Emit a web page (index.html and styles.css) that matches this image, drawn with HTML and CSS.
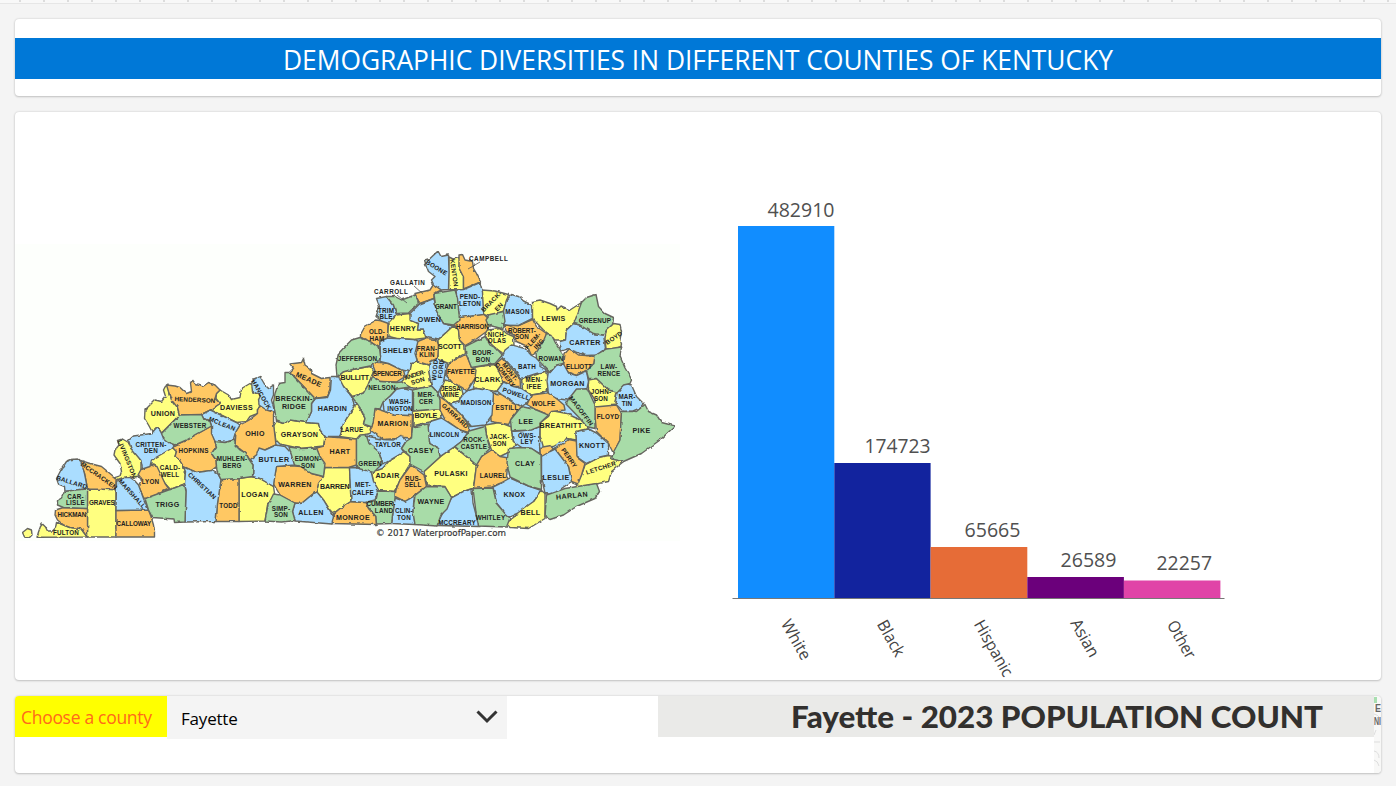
FILE: index.html
```html
<!DOCTYPE html>
<html lang="en">
<head>
<meta charset="utf-8">
<title>Demographic Diversities in Kentucky</title>
<link rel="stylesheet" href="styles.css">
</head>
<body>
<div class="ruler"></div>
<main class="page">
<header class="card card-title"><h1 class="banner"><svg class="banner-text" viewBox="0 0 1366 41"><text x="268" y="32" textLength="830" lengthAdjust="spacingAndGlyphs">DEMOGRAPHIC DIVERSITIES IN DIFFERENT COUNTIES OF KENTUCKY</text></svg></h1></header>
<section class="card card-main">
<svg class="map" viewBox="15 244 665 297">
<defs>
<filter id="rough" x="0" y="0" width="1" height="1"><feTurbulence type="fractalNoise" baseFrequency=".16" numOctaves="2" seed="4"/><feDisplacementMap in="SourceGraphic" scale="2.8" xChannelSelector="R" yChannelSelector="G"/></filter>
</defs>
<path class="blue" d="M400,335 550,365 595,400 590,460 480,480 300,480 250,440 335,400z"/>
<g class="counties" filter="url(#rough)">
<path class="yellow" d="M27.5,528.5 31.5,530 32,535 29,538 24.5,537 22.5,532.5z
M37,537.3 38.5,532 40.5,526.5 42.5,524 45.5,527 47.5,531 52.5,531 55.5,528 56.5,522.5 63.5,525 70,527.5 81,528.5 87,537z
M87.5,489 116,489.5 116,537 87.5,537z
M122.5,439 128.5,442.5 131,448.5 138.5,456 141,461.5 141,470 138.5,476 135,478.5 130,476.5 123.5,477.5 115,480.5 112.5,478.5 120,476 121.5,471.5 120,463.5 114,455 115,450 119,445 117.5,440.5z
M165,387 168,384 169,395 173.5,400 177.5,407.5 179.5,415 161.5,433 157.5,426.5 152,431.5 148.5,425 144.5,418.5 145,410 155,400 161.5,401.5 165.5,396.5 163.5,390z
M220,390 228.5,395 231.5,399.5 240,397.5 241.5,388.5 250,383.5 253.5,386 252.5,391.5 260.5,395 259,400 262.5,405 257.5,409.5 257.5,413.5 250,416.5 246.5,421.5 236.5,422.5 210.5,410 220,403.5 216,398.5 216.5,393.5z
M171.5,446.5 176.5,451.5 175,456.5 179.5,460 183.5,466.5 185.5,471.5 184.5,484 170.5,489.5 165,483.5 158.5,473.5 155,465.5 150,464 151.5,459z
M239,478.5 250,476.5 260,478.5 273.5,486.5 275,496.5 267.5,505 265,521 239,521.5z
M276.5,421 283.5,423.5 290,420 306.5,422.5 318.5,423.5 320,430 325,436.5 323.5,446 300,448.5 280,444 276,440 273.5,426.5z
M357,404 361.5,411.5 365,418.5 363.5,423.5 372.5,427.5 370,433.5 363.5,435 356.5,439 339.5,436.5 343.5,423.5 346.5,418.5 353,406.5z
M325,467.5 349.5,467.5 351,501.5 340,508.5 333.5,513.5 330,510 323.5,500 316.5,492 318.5,483.5 323,476.5z
M403.5,451.5 410,456.5 410,464 400,480 395,491.5 378.5,490.5 373.5,481.5 371.5,472.5 382.5,468.5 390,460z
M338,377 343.5,371.5 350,370 370,366.5 373.5,371 371.5,377 368,385 363.5,393 352.5,396.5 343.5,386.5 339.5,381.5z
M449,257 453,259 460,257.5 459,268 463.5,276.5 463.5,290 448.5,289.5z
M481.5,290 495,291 508.5,294.5 506.5,301.5 503.5,311 490,316.5 483.5,314.5z
M388.5,323.5 396.5,315 410,313.5 411.5,320 418.5,324 417.5,330 423.5,330 426,338 413.5,339.5 396.5,338.5 387.5,336z
M454,325 458.5,330 459.5,340 463.5,345 464.5,353.5 448.5,363.5 438,359 438,340 446.5,332z
M532.5,301.5 540,300 550,303.5 556.5,306.5 557,310 561,306 570,310 581.5,302.5 580,311.5 573.5,323.5 566.5,330 565.5,340 555,340 550,335 543.5,330 532.5,318.5z
M613.5,323.5 620,324.5 621.5,331.5 620,340 622.5,346.5 613.5,350 606,348.5 605,338.5 606.5,330z
M486.5,330 501.5,328.5 506.5,333.5 513.5,336.5 514,345 503.5,353.5 496,348.5 488.5,341.5 485,335z
M411.5,363.5 417.5,362 428.5,365 430,378 431,386 418.5,388.5 405,387 401.5,382 408,374z
M445,380 452,382 461.5,388 463,394 459,402 450,404 443,398 440,392z
M413.5,411 440,408.5 441,418 428.5,422 413,426z
M475,367 495,364.5 501.5,375 503,385 496.5,391.5 486.5,390 473.5,388 475,378.5z
M521.5,377.5 528.5,377.5 538,374 546.5,370 548.5,381.5 547.5,390 540,393.5 531.5,395 522.5,388.5z
M588.5,380 596.5,378.5 608.5,390 617,392 615,402 616.5,406.5 595,408.5 595,400 588.5,390z
M540,423 548.5,416.5 551.5,410.5 566.5,413.5 583.5,421.5 588.5,428.5 576,431.5 576.5,440 566.5,438.5 553.5,446.5 543.5,447.5 540,435z
M485,425 500,422.5 511.5,427 511.5,431 513.5,441.5 516.5,443.5 510,451.5 500,456.5 491.5,450 487,437z
M454,446.5 476.5,465 473.5,488 463.5,491.5 451.5,497.5 445,486.5 426.5,485 424,471.5 440,457z
M585,465 600,457 608.5,455.5 621.5,458.5 623.5,461.5 611.5,471.5 608.5,481.5 596.5,484 575,487.5 581.5,475z
M541.5,490.5 545,493.5 545,518.5 528.5,528.5 510,527.5 506,523.5 516.5,515 520,508.5 533.5,501.5z"/>
<path class="orange" d="M63.5,507.5 87.5,508.5 87.5,537 83,531.5 81,528.5 70,527.5 63.5,525 57.5,520 55,515 55.5,510z
M79,460 90,463.5 101.5,466.5 110,473.5 116,478.5 116,489.5 87.5,489 84.5,473.5z
M116,510.5 148.5,510 151,516.5 153.5,525 154.5,531.5 154.5,537 116,537z
M150,465 157,466.5 165,483.5 169,489 148.5,498.5 143.5,498 138.5,485.5 141.5,480 138,475 141,469.5z
M166.5,385 175,386 180,387.5 186.5,393.5 191.5,391.5 190.5,383 192.5,380 195,383.5 203.5,386 208.5,382.5 215,385 220,390 216.5,393.5 215,398.5 220,403.5 210.5,410 201.5,414.5 179.5,415 177.5,407.5 171.5,400 168.5,391.5z
M211.5,426 215,441.5 216.5,446.5 211.5,453.5 216,460 216.5,466.5 211.5,470.5 196.5,472.5 183.5,466.5 179.5,460 175,456.5 176.5,451.5 171.5,446.5 175,445 186.5,440z
M221,479.5 239,478.5 239,521.5 216,521.5 217.5,503.5z
M262.5,406 273.5,412.5 273.5,423.5 276,445 265,450 256.5,455 250,460 246,453.5 240,449 235,446.5 236,431.5 240,425 248.5,420.5 257.5,413.5 257.5,409.5z
M290,372 293.5,368.5 290,364 301.5,362.5 303.5,358.5 305,365 310,368.5 311.5,373.5 321.5,378.5 330,377.5 330,390 327.5,396.5 315,398.5z
M325,436.5 356.5,439 356.5,465 348.5,467.5 325,467.5 320,458.5 316.5,448 324,446z
M276.5,466 294.5,466 301.5,466.5 311.5,473.5 323.5,476.5 318.5,483.5 316.5,491.5 310,496.5 301.5,503.5 295,503.5 280,495 273.5,484z
M333.5,514 340,508.5 351,501.5 365,502.5 368.5,508.5 376,516.5 376.5,524.5 331.5,523.5z
M375,408.5 385,411.5 393.5,415 412.5,415.5 411.5,438 405,437.5 398.5,438.5 383.5,439.5 370,430 373.5,418.5z
M371.5,361.5 388.5,363.5 403.5,370 405,376.5 396.5,382 380,381.5 371.5,376.5 375,371z
M360.5,334.5 365,326.5 376.5,320 388,322 387.5,338.5 380,341.5 379.5,347.5 370,341.5 360.5,337.5z
M415,293.5 430,290 433.5,284.5 441.5,290 434,293.5 434,298.5 419.5,303.5z
M459,255 462.5,254.5 465,260 472.5,261.5 473.5,268.5 476.5,273.5 480.5,282 463.5,289 463.5,277 459,268z
M417.5,341.5 425,338.5 436.5,339.5 438.5,345 437.5,360 430,361.5 428.5,365 417.5,361.5 415,353.5z
M454,324.5 460,320 459.5,317 483.5,314 491.5,321.5 486.5,331.5 475,340 465,345.5 459.5,340 458.5,330z
M503.5,325 518.5,325.5 532.5,319.5 536.5,326.5 546.5,333.5 545,340 538.5,351.5 531.5,355.5 527.5,346.5 516.5,341.5 513.5,335 506.5,331.5z
M565,353.5 569.5,348.5 578.5,355 586.5,355.5 595,356.5 594,363.5 586.5,371 576.5,375.5 568.5,372.5 563.5,366.5z
M496,363.5 502.5,358 508,364 520,378.5 520.5,386.5 513.5,386.5 503.5,381.5 499,372z
M448.5,363.5 466.5,354 471.5,367.5 476,370 475,378.5 467,391 461.5,387 452,382 445,374z
M439.5,396.5 446.5,401.5 460,413.5 470,426.5 468.5,432.5 460,430 445,419.5 440,410z
M493.5,393 501.5,394.5 511.5,401.5 521.5,406.5 511.5,418.5 508.5,424.5 491.5,421.5 490,413.5 493,402z
M531.5,395 550,392.5 556.5,398.5 564,405 565,410 551.5,411.5 548.5,415 536.5,410 527,404.5z
M595,407 616.5,405 621.5,413.5 620,440 613.5,453.5 608.5,443.5 596.5,431.5 595,416z
M555,449 568.5,439.5 576.5,441 577.5,458 585,463.5 581.5,475 578,484 571.5,481.5 568.5,467z
M540,447.5 551,445.5 553,449 549,453 543,458 540,453z
M491.5,450 500,456.5 508.5,458 506.5,476.5 511,482 500,483.5 492,487 473.5,488.5 476.5,465 481.5,456.5z
M411,465 424,475 426.5,486.5 415,495 405,501.5 395,496.5 396,490 400,480z"/>
<path class="blue" d="M77.5,459 81,461.5 84.5,473.5 87.5,488.5 75,490.5 65,491.5 64.5,486.5 58.5,484 56.5,478.5 61,470 66.5,461.5 71.5,459.5z
M116.5,481.5 123.5,477.5 130,477.5 134.5,480.5 138.5,485 143.5,498.5 148.5,510 116,510.5z
M128.5,440.5 133.5,436 151.5,433.5 157.5,426.5 161,432.5 166.5,438.5 175,444 171.5,448.5 151.5,460 150,466.5 142.5,469 141,460.5 131,448.5z
M255,378.5 260,376.5 265,385 268.5,388.5 273.5,385 273.5,395 271.5,400 275,412.5 266.5,410 259,405 258.5,400 260.5,395.5 252.5,391.5 251.5,383.5z
M201.5,414.5 210.5,410 236.5,422.5 240,425 236,431.5 233.5,440 225,442.5 215,441.5 211.5,433.5 211.5,426 210,421.5 203.5,418.5z
M183.5,467 196.5,472.5 211.5,470.5 218,474 221,479.5 217.5,503.5 216,521.5 185,522 186,490 184.5,484 185.5,471.5z
M276,445 285,446.5 291.5,453.5 295,465 276.5,466.5 274,481.5 273.5,486.5 260,478.5 252.5,476.5 253,465 250,460 256.5,455 259,448 265,450z
M331.5,376.5 338.5,376.5 343.5,386.5 351.5,396.5 355,406.5 346.5,418.5 343.5,423.5 339.5,436.5 325,436.5 320,430 318.5,423.5 306.5,422.5 311.5,411.5 311.5,403.5 315.5,398.5 327.5,397.5 330.5,390z
M295,503 301.5,503.5 313.5,493.5 317,492 323.5,500 329.5,510 333.5,516.5 332,524 295,521 292.5,511.5z
M349.5,467.5 368.5,468 371.5,473 373.5,481.5 378.5,490 375,500 365,502.5 351,501.5z
M366.5,436 383.5,439.5 393.5,440 401.5,435 406,441.5 401.5,448.5 403.5,452 393.5,458 383.5,464 378.5,452 369,444z
M396.5,389 403.5,387.5 412.5,390 412.5,415.5 393.5,415 384,411 383,402 390,396z
M376.5,298.5 386.5,296.5 393.5,305 396.5,315 388.5,323.5 381.5,321 376,316.5 379.5,306.5z
M424.5,260 430,258.5 438,251 441,256.5 448.5,255 449,271.5 448.5,289.5 441.5,290 433.5,284.5 431.5,280 435,276.5 428.5,271.5 426.5,266.5z
M456,290 463.5,289.5 480,282.5 482.5,292 483.5,314.5 459.5,317.5z
M410,313.5 419.5,304 434,298.5 436,310 443.5,323.5 453,326 446.5,332 438.5,339 426.5,336.5 423.5,330 417.5,330 418.5,323.5 410,320z
M380,341.5 387.5,338 413.5,339.5 418,341 415,353.5 417.5,361.5 411.5,363.5 410,371.5 401.5,370 388.5,363.5 380,361.5 380.5,356.5z
M506.5,300 511.5,294.5 518.5,296.5 523.5,301 531.5,305 532.5,318.5 518.5,325.5 503.5,325 503.5,311z
M573.5,323.5 580,325 593.5,333.5 603.5,335 605.5,348.5 596.5,355 586.5,355.5 573.5,351 568.5,348.5 560,351.5 559.5,341.5 565.5,340 566.5,330z
M505,350 511.5,345 525,348.5 531.5,355.5 540,360 540,366.5 548.5,371 536.5,373.5 521,378.5 515,370 502.5,357z
M623.5,383 631.5,385 636.5,396.5 643.5,403.5 640,408 633,411 623.5,411.5 615,403.5 617,393z
M548.5,371 550,372.5 556.5,365 563.5,364 568.5,373 576.5,375.5 586.5,371 588.5,381.5 587,388.5 578.5,390 566.5,400 556.5,398.5 548.5,393.5 547,381z
M430,361.5 437.5,358.5 446,363.5 445,374 443.5,382 438,393 431.5,386 430,378 428.5,370z
M460,398.5 463.5,394 467,391 475,388.5 486.5,390 493.5,393 492,415 485,425 471.5,426.5 460,413.5 450,404 459,402z
M430,421.5 441.5,418 460,430 468.5,433.5 461.5,441.5 454,447 440,456.5 438.5,448.5 430,443.5 427,432z
M503.5,382 513.5,386.5 521.5,388.5 531.5,395 526.5,403.5 521.5,406.5 501.5,394.5 497,391z
M576,431.5 588.5,429 596.5,433 608.5,443.5 608.5,455 600,457 586.5,463.5 577,457z
M541.5,456.5 550,451.5 555,449 568.5,466.5 571.5,481.5 561.5,488.5 555,495 545,493.5 541.5,476.5z
M511.5,431.5 528.5,430 540,426.5 539.5,445 540,453.5 531.5,448.5 521.5,447.5 513.5,441.5z
M395,498 405,501.5 414.5,496 413,510 415,524.5 391.5,523.5z
M463.5,491.5 472,489 473,503 476.5,516.5 479,526.5 436.5,525.5 442,514.5 451.5,498z
M493,487 500,483.5 510,478 528.5,486 541.5,490.5 533.5,501.5 517,513.5 507,518 503,511 496.5,503z"/>
<path class="green" d="M64.5,491.5 75,490 87.5,489 87.5,508.5 63.5,507.5 57.5,505 57.5,500.5 61.5,498z
M179.5,415 201.5,414.5 203.5,418.5 210,421.5 211.5,426 186.5,440 175,445 168.5,442.5 163.5,438.5 161.5,433.5 170,425z
M168.5,490 170.5,489.5 184.5,484 186,491.5 185,522 174.5,522.5 174,519 152.5,517.5 148.5,510 145,498.5z
M216.5,446.5 215,441.5 225,442.5 235,440 235,445 240,450 246,453.5 248.5,458.5 253,465 252.5,476.5 239,478.5 221,479.5 217,471.5 216,460 211.5,453.5z
M273.5,494 280,495 295,503 292.5,511.5 295,520.5 281.5,522 265,521 268,505z
M290,372.5 315,398.5 311.5,403.5 311.5,411.5 306.5,422.5 290,420 283.5,423.5 276.5,421 273.5,402.5 275,393.5 278.5,383.5 285,382.5 285,372.5z
M289,447 300,448.5 316.5,448 320,456.5 325,463.5 323.5,476.5 311.5,473.5 300,466 294.5,465z
M360,435 366,434.5 369,443.5 378.5,451.5 382.5,463.5 373.5,472.5 356.5,468 356.5,439z
M371.5,376.5 380,381.5 396.5,382.5 401.5,382 410,387 396.5,389 390,396 383,402 380,409 375,408.5 373.5,420 372,427 363.5,424 365,418.5 361.5,410 357,403.5 352,397 363.5,393 368,385z
M360,337.5 370,341.5 379.5,348.5 380.5,356.5 378,361.5 370,366 350,370 343,372 337,377 336,365 338.5,353.5 345,346.5 351.5,340z
M386.5,296.5 395,296.5 401.5,300 415,295 419.5,303.5 411.5,310 408.5,313 396.5,313.5 393.5,305z
M434,293.5 455,290 457.5,298 459.5,320 453.5,325 443.5,323.5 436,310z
M490,314.5 503.5,311.5 505,321.5 501.5,328.5 488,325 486,320z
M581.5,302.5 586.5,297.5 596,294.5 598.5,306.5 605,313.5 613.5,317.5 612.5,324.5 606.5,330 603.5,335 593.5,333.5 580,325 574,323.5z
M465,346.5 485,336.5 490,345 496.5,348.5 502.5,355 495,363.5 471.5,367.5 466,354z
M546.5,333.5 551.5,335 556.5,345 563.5,355 563.5,363.5 556.5,365 550,372.5 536.5,358.5 536,353 543,342z
M595,355.5 606.5,349 621.5,347 620,356.5 625,368 630,376.5 631.5,380 630,383.5 623.5,385 617,392 608.5,390 596.5,378.5 588.5,378.5 586.5,371 594,363.5z
M413.5,390 418.5,388.5 431.5,386 438,393 440,400 440,408.5 413.5,411z
M412.5,427 428,424 429.5,443.5 438.5,448.5 440,457 424,471.5 410,464 410,456.5 401.5,448.5 406,441.5 411.5,438z
M576.5,389 586.5,389 589,392 595,405 595,428.5 586.5,426.5 580,418.5 566,404 568,400z
M521.5,406.5 536.5,410 548.5,415 540,423 540,426.5 531.5,430 511.5,431 510.5,420z
M621.5,411.5 636.5,411.5 645,404.5 648.5,411.5 656.5,415 661.5,422.5 675,426 660,440 641.5,453.5 623.5,461.5 611.5,459 613.5,452 620,440z
M546.5,495 565,488.5 596.5,483.5 599.5,491.5 595,498.5 576.5,506.5 563.5,515 550,519.5 545,516.5z
M508.5,448.5 521.5,447.5 531.5,448.5 541,455 541.5,489.5 528.5,486 510,477 507,463z
M469,431 485,426.5 487.5,440 490,448.5 481.5,456.5 476.5,465 455,446.5 462,441z
M415,495.5 426.5,486.5 445,487 451.5,497.5 447,509 441,515 437,526 415,524.5 413,512z
M378,491 395,491.5 395,498 391.5,523.5 376.5,524 376,516.5 368.5,508 366,503 376,500z
M473,488.5 493,488 496.5,503.5 505,513.5 510,518 506.5,527 478.5,526 476.5,516.5z"/>
</g>
<path class="leader" d="M468,269 480,262 M414,286 423,294 M397,295 407,303 M501,323 515,328"/>
<g class="large">
<text x="163" y="416">UNION</text><text x="236.500" y="410">DAVIESS</text><text x="255" y="436">OHIO</text><text x="299.500" y="436.500">GRAYSON</text><text x="332.500" y="410.500">HARDIN</text><text x="294" y="401">BRECKIN-</text><text x="294" y="408.500">RIDGE</text><text x="309" y="382" transform="rotate(24 309 379)">MEADE</text><text x="274" y="461.500">BUTLER</text><text x="255" y="497">LOGAN</text><text x="295" y="486.500">WARREN</text><text x="311" y="514.500">ALLEN</text><text x="340" y="454">HART</text><text x="335" y="489" textLength="30">BARREN</text><text x="353" y="520">MONROE</text><text x="387.500" y="478">ADAIR</text><text x="393" y="426">MARION</text><text x="355" y="380" textLength="29">BULLITT</text><text x="403" y="331">HENRY</text><text x="398" y="353">SHELBY</text><text x="429.500" y="322">OWEN</text><text x="450" y="348.500" textLength="24">SCOTT</text><text x="553.500" y="321">LEWIS</text><text x="585" y="344.500">CARTER</text><text x="567.500" y="386">MORGAN</text><text x="451" y="476">PULASKI</text><text x="421" y="452.500">CASEY</text><text x="431" y="504">WAYNE</text><text x="167.500" y="507">TRIGG</text><text x="641.500" y="433">PIKE</text><text x="592" y="448">KNOTT</text><text x="556" y="479.500">LESLIE</text><text x="525" y="466">CLAY</text><text x="514.500" y="497">KNOX</text><text x="530.500" y="515">BELL</text><text x="572" y="498" transform="rotate(-6 572 495)">HARLAN</text><text x="561" y="427.500">BREATHITT</text><text x="526" y="423.500">LEE</text><text x="487.500" y="382">CLARK</text><text x="426" y="418" textLength="23">BOYLE</text>
</g>
<g class="medium">
<text x="195" y="402" transform="rotate(3 195 400)" textLength="41">HENDERSON</text><text x="190" y="427.500">WEBSTER</text><text x="193.500" y="453">HOPKINS</text><text x="222" y="426" transform="rotate(22 222 424)">MCLEAN</text><text x="262" y="397" transform="rotate(60 262 394)">HANCOCK</text><text x="232" y="461">MUHLEN-</text><text x="232" y="467.500">BERG</text><text x="170" y="469.500">CALD-</text><text x="170" y="477">WELL</text><text x="150.500" y="484">LYON</text><text x="151" y="446.500">CRITTEN-</text><text x="151" y="453">DEN</text><text x="127" y="461" transform="rotate(68 127 459)">LIVINGSTON</text><text x="202" y="488" transform="rotate(43 202 486)">CHRISTIAN</text><text x="132" y="496" transform="rotate(48 132 494)">MARSHALL</text><text x="99" y="478" transform="rotate(35 99 476)">MCCRACKEN</text><text x="72" y="484.500" transform="rotate(17 72 482)">BALLARD</text><text x="75.500" y="499">CAR-</text><text x="75.500" y="505">LISLE</text><text x="72" y="517" textLength="29">HICKMAN</text><text x="66" y="535">FULTON</text><text x="102" y="505" textLength="26">GRAVES</text><text x="134" y="526" textLength="35">CALLOWAY</text><text x="228.500" y="508">TODD</text><text x="281" y="510.500">SIMP-</text><text x="281" y="517">SON</text><text x="308" y="461">EDMON-</text><text x="308" y="467.500">SON</text><text x="352" y="432">LARUE</text><text x="370" y="466">GREEN</text><text x="363" y="487">MET-</text><text x="363" y="494.500">CALFE</text><text x="381" y="506" textLength="29">CUMBER-</text><text x="384" y="512.500">LAND</text><text x="404" y="513">CLIN-</text><text x="404" y="519.500">TON</text><text x="388" y="446.500">TAYLOR</text><text x="400" y="404">WASH-</text><text x="400" y="410.500">INGTON</text><text x="382" y="389.500">NELSON</text><text x="387.500" y="375.500" textLength="29">SPENCER</text><text x="357.500" y="360.500">JEFFERSON</text><text x="377" y="334">OLD-</text><text x="377" y="340.500">HAM</text><text x="386" y="312.500">TRIM</text><text x="386" y="318.500">BLE</text><text x="391" y="293.500" textLength="34">CARROLL</text><text x="407.500" y="284.500" textLength="35">GALLATIN</text><text x="488.500" y="261" textLength="39">CAMPBELL</text><text x="437" y="270" transform="rotate(32 437 267)">BOONE</text><text x="454" y="275" transform="rotate(82 454 273)">KENTON</text><text x="446" y="309" textLength="22">GRANT</text><text x="470" y="299">PEND-</text><text x="470" y="305.500">LETON</text><text x="493" y="303" transform="rotate(-45 493 303)">BRACK-</text><text x="499" y="309" transform="rotate(-45 499 307)">EN</text><text x="517.500" y="314">MASON</text><text x="472.500" y="329" textLength="33">HARRISON</text><text x="522" y="333" textLength="28">ROBERT-</text><text x="522" y="339">SON</text><text x="497" y="337">NICH-</text><text x="497" y="342.500">OLAS</text><text x="533" y="343" transform="rotate(-48 533 341)">FLEM-</text><text x="539" y="346" transform="rotate(-48 539 344)">ING</text><text x="551" y="360.500">ROWAN</text><text x="595" y="323">GREENUP</text><text x="614" y="340" transform="rotate(-35 614 338)">BOYD</text><text x="579" y="368.500" textLength="26">ELLIOTT</text><text x="609" y="369">LAW-</text><text x="609" y="376">RENCE</text><text x="483" y="355">BOUR-</text><text x="483" y="362">BON</text><text x="427" y="350.500">FRAN-</text><text x="427" y="357">KLIN</text><text x="461" y="374" textLength="28">FAYETTE</text><text x="415" y="377" transform="rotate(-18 415 375)" textLength="22">ANDER-</text><text x="418" y="383" transform="rotate(-18 418 381)">SON</text><text x="435" y="371" transform="rotate(-85 435 369)">WOOD-</text><text x="441" y="371" transform="rotate(-85 441 369)">FORD</text><text x="527" y="369">BATH</text><text x="510" y="374" transform="rotate(52 510 372)">MONT-</text><text x="505" y="377" transform="rotate(52 505 375)">GOMERY</text><text x="534" y="382">MEN-</text><text x="534" y="388.500">IFEE</text><text x="516" y="396" transform="rotate(18 516 394)">POWELL</text><text x="543.500" y="406">WOLFE</text><text x="507" y="410">ESTILL</text><text x="476" y="404.500">MADISON</text><text x="451" y="391" textLength="20">JESSA</text><text x="451" y="396.500">MINE</text><text x="426" y="396.500">MER-</text><text x="426" y="403.500">CER</text><text x="455" y="418" transform="rotate(43 455 416)">GARRARD</text><text x="444.500" y="437">LINCOLN</text><text x="474" y="442">ROCK-</text><text x="474" y="449">CASTLE</text><text x="499.500" y="439">JACK-</text><text x="499.500" y="446">SON</text><text x="527" y="438">OWS-</text><text x="527" y="444">LEY</text><text x="581" y="413" transform="rotate(53 581 411)">MAGOFFIN</text><text x="608" y="419">FLOYD</text><text x="601" y="394">JOHN-</text><text x="601" y="401">SON</text><text x="627" y="399">MAR-</text><text x="627" y="406">TIN</text><text x="569" y="460" transform="rotate(55 569 458)">PERRY</text><text x="601" y="470" transform="rotate(-18 601 468)">LETCHER</text><text x="493" y="477.500">LAUREL</text><text x="413" y="481">RUS-</text><text x="413" y="487">SELL</text><text x="457" y="525">MCCREARY</text><text x="490.500" y="520">WHITLEY</text>
</g>
<text class="copyright" x="376" y="536" textLength="130" lengthAdjust="spacingAndGlyphs">© 2017 WaterproofPaper.com</text>
</svg>
<svg class="chart" viewBox="715 190 520 490">
<rect x="738" y="226" width="96.300" height="372" fill="#118dff"/><rect x="834.300" y="463" width="96.300" height="135" fill="#12239e"/><rect x="930.600" y="547" width="96.700" height="51" fill="#e66c37"/><rect x="1027.300" y="577" width="96.600" height="21" fill="#6b007b"/><rect x="1123.900" y="580.500" width="96.500" height="17.500" fill="#e044a7"/>
<path class="axis" d="M732.500 598.500H1224.500"/>
<g class="values"><text x="767.500" y="216.500" textLength="67" lengthAdjust="spacingAndGlyphs">482910</text><text x="864.500" y="453" textLength="66" lengthAdjust="spacingAndGlyphs">174723</text><text x="964.500" y="537" textLength="56" lengthAdjust="spacingAndGlyphs">65665</text><text x="1060.500" y="567" textLength="56" lengthAdjust="spacingAndGlyphs">26589</text><text x="1156.500" y="570" textLength="55.500" lengthAdjust="spacingAndGlyphs">22257</text></g>
<g class="categories"><text transform="translate(780.500 623.500) rotate(60.500)" textLength="43.500" lengthAdjust="spacingAndGlyphs">White</text><text transform="translate(876.500 624) rotate(60.500)" textLength="39" lengthAdjust="spacingAndGlyphs">Black</text><text transform="translate(973.500 624) rotate(60.500)" textLength="62" lengthAdjust="spacingAndGlyphs">Hispanic</text><text transform="translate(1070 623) rotate(60.500)" textLength="41" lengthAdjust="spacingAndGlyphs">Asian</text><text transform="translate(1166.500 624.500) rotate(60.500)" textLength="41" lengthAdjust="spacingAndGlyphs">Other</text></g>
</svg>
</section>
<section class="card card-controls">
<div class="prompt">Choose a county</div>
<div class="select"><span>Fayette</span><svg class="chevron" viewBox="0 0 22 14"><path d="M1.500 1.500 11 11 20.500 1.500"/></svg></div>
<h2 class="count"><svg viewBox="0 0 716 42"><text x="133" y="32" textLength="532" lengthAdjust="spacingAndGlyphs">Fayette - 2023 POPULATION COUNT</text></svg></h2>
<svg class="sliver" viewBox="0 0 7 77"><path fill="#a8dfb0" d="M0 1h3v6H0z"/><text x="1" y="16" textLength="6" lengthAdjust="spacingAndGlyphs">E</text><text x="0" y="29" textLength="7" lengthAdjust="spacingAndGlyphs">NI</text><path class="sliver-line" d="M0 18q4 1 5 3M2 34l-2 5M0 46h6M0 55q5 1 5 7M0 64q4 1 5 6"/></svg>
</section>
</main>
</body>
</html>
```

FILE: styles.css
```css
* { box-sizing: border-box; }
body { margin: 0; width: 1396px; height: 786px; overflow: hidden; background: #f4f4f4; font-family: "Open Sans", "Noto Sans", sans-serif; }
h1, h2 { margin: 0; font-weight: 400; }
svg { display: block; }
.ruler { height: 4px; border-bottom: 1px solid #e6e6e6; background: repeating-linear-gradient(90deg, transparent 0 19px, #dcdcdc 19px 21px, transparent 21px 24px) 0 0 / 100% 2px no-repeat #f8f8f8; }
.page { display: flex; flex-direction: column; gap: 16px; padding: 15px 15px 0; }
.card { background: #fff; border-radius: 4px; overflow: hidden; box-shadow: 0 0 2px #c4c4c4, 0 1px 2px #c4c4c4; }
.card-title { height: 77px; padding-top: 19px; }
.banner { height: 41px; background: #0078d7; }
.banner-text { width: 1366px; height: 41px; }
.banner text { fill: #fff; font-size: 26.5px; }
.card-main { height: 568px; display: flex; gap: 35px; }
.map { width: 665px; height: 297px; margin-top: 132px; background: #fdfffc; flex: none; }
.chart { width: 520px; height: 490px; margin-top: 78px; flex: none; }
.counties { stroke: #66665f; stroke-width: 1.4; stroke-linejoin: round; }
.yellow { fill: #ffff80; }
.orange { fill: #ffc864; }
.blue { fill: #aaddff; }
.green { fill: #a8dca8; }
.leader { stroke: #555; stroke-width: .8; }
.large, .medium { font-family: "Liberation Sans", Arial, sans-serif; font-weight: 700; fill: #222; text-anchor: middle; }
.large { font-size: 7.1px; letter-spacing: .35px; }
.medium { font-size: 6.3px; letter-spacing: .2px; }
.copyright { font: 400 8.5px "DejaVu Sans", sans-serif; fill: #333; stroke: #333; stroke-width: .15; }
.axis { stroke: #777; stroke-width: 1; }
.values { font-size: 19.3px; fill: #505050; }
.categories { font-size: 16.5px; fill: #444; }
.card-controls { height: 77px; display: flex; align-items: flex-start; }
.prompt { width: 152px; height: 41px; padding-left: 6px; background: #ff0; color: #ff6a1a; font-size: 17.5px; line-height: 43px; letter-spacing: -.3px; white-space: nowrap; }
.select { width: 340px; height: 43px; margin-right: 151px; padding: 0 9px 3px 14px; display: flex; align-items: center; justify-content: space-between; background: #f4f4f4; font-size: 17px; color: #000; }
.select span { padding-top: 4px; letter-spacing: -.2px; }
.chevron { width: 22px; height: 14px; margin-top: 1px; fill: none; stroke: #333; stroke-width: 3; }
.count { width: 716px; height: 41px; background: #eaeae8; }
.count svg { width: 716px; height: 42px; }
.count text { font: 900 30px Lato, sans-serif; fill: #32302e; }
.sliver { width: 7px; height: 77px; background: #f8f8f7; }
.sliver text { font: 700 11px "Liberation Sans", sans-serif; fill: #666; }
.sliver-line { fill: none; stroke: #ddd; }
```
